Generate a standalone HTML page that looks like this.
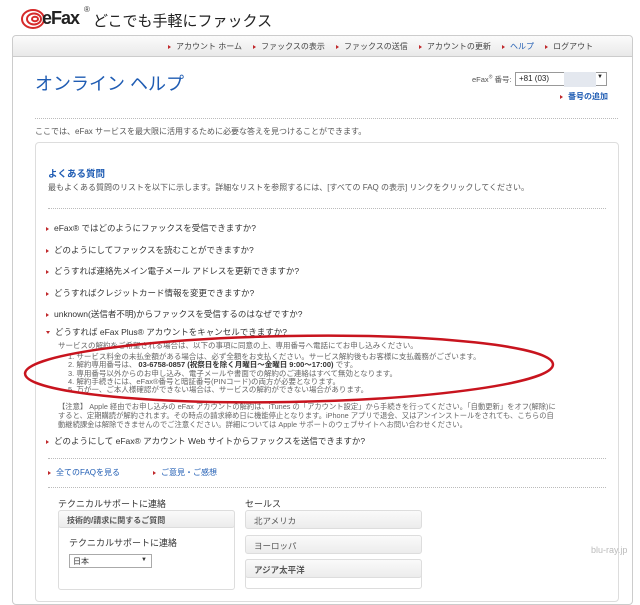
<!DOCTYPE html>
<html><head><meta charset="utf-8"><style>
*{margin:0;padding:0;box-sizing:border-box}
body{width:640px;height:578px;overflow:hidden;background:#fff;font-family:"Liberation Sans","Noto Sans CJK JP",sans-serif;position:relative;color:#555;font-size:8px}
.a{position:absolute;white-space:nowrap}
.tri{display:inline-block;width:0;height:0;border-left:3px solid #c0282b;border-top:2.5px solid transparent;border-bottom:2.5px solid transparent;margin-right:5px;vertical-align:middle}
.dot{position:absolute;border-top:1px dotted #bbb;height:0}
.faq{position:absolute;left:46px;font-size:8.5px;color:#333}
.blue{color:#1f5cb3}
.box{position:absolute;border:1px solid #ddd;border-radius:3px;background:linear-gradient(#fafafa,#ececec);font-size:8.5px;padding:4px 8px;color:#555}
</style></head><body>
<div class="a" style="left:20px;top:6px;width:26px;height:22px">
<svg width="30" height="24" viewBox="0 0 30 24"><g fill="none" stroke="#d62a2a" stroke-width="2"><ellipse cx="13" cy="13" rx="11" ry="9"/><ellipse cx="14" cy="13" rx="7" ry="5.5"/><ellipse cx="15" cy="13" rx="3" ry="2.2"/></g></svg></div>
<div class="a" style="left:42px;top:8px;font-size:18px;font-weight:bold;color:#222;letter-spacing:-1px">eFax</div>
<div class="a" style="left:84px;top:5px;font-size:8px;color:#333">®</div>
<div class="a" style="left:93px;top:10px;font-size:15px;color:#222">どこでも手軽にファックス</div>
<div class="a" style="left:12px;top:35px;width:621px;height:570px;border:1px solid #ccc;border-radius:4px"></div>
<div class="a" style="left:13px;top:36px;width:619px;height:21px;background:linear-gradient(#fbfbfb,#e9e9e9);border-bottom:1px solid #ccc;border-radius:4px 4px 0 0"></div>
<div class="a" style="left:168px;top:42px;font-size:8px;color:#444;line-height:10px">
<span class="tri"></span>アカウント ホーム&nbsp;&nbsp;&nbsp;&nbsp;&nbsp;<span class="tri"></span>ファックスの表示&nbsp;&nbsp;&nbsp;&nbsp;&nbsp;<span class="tri"></span>ファックスの送信&nbsp;&nbsp;&nbsp;&nbsp;&nbsp;<span class="tri"></span>アカウントの更新&nbsp;&nbsp;&nbsp;&nbsp;&nbsp;<span class="tri"></span><span class="blue">ヘルプ</span>&nbsp;&nbsp;&nbsp;&nbsp;&nbsp;<span class="tri"></span>ログアウト</div>
<div class="a blue" style="left:35px;top:70px;font-size:18px">オンライン ヘルプ</div>
<div class="a" style="left:472px;top:74px;font-size:7.5px;color:#555">eFax<sup style="font-size:5px">®</sup> 番号:</div>
<div class="a" style="left:515px;top:72px;width:92px;height:14px;border:1px solid #999;background:#fff;font-size:8px;color:#222;padding:1px 3px">+81 (03)<span style="position:absolute;left:48px;top:-1px;width:32px;height:15px;background:#e4e8ef"></span><span style="position:absolute;right:3px;top:1px;font-size:6px">▼</span></div>
<div class="a blue" style="left:560px;top:91px;font-size:8px;font-weight:bold"><span class="tri"></span>番号の追加</div>
<div class="dot" style="left:35px;top:118px;width:583px"></div>
<div class="a" style="left:35px;top:126px;font-size:8px;color:#555">ここでは、eFax サービスを最大限に活用するために必要な答えを見つけることができます。</div>
<div class="a" style="left:35px;top:142px;width:584px;height:460px;border:1px solid #ddd;border-radius:4px"></div>
<div class="a blue" style="left:48px;top:166px;font-size:9.5px;font-weight:bold">よくある質問</div>
<div class="a" style="left:48px;top:182px;font-size:8px">最もよくある質問のリストを以下に示します。詳細なリストを参照するには、[すべての FAQ の表示] リンクをクリックしてください。</div>
<div class="dot" style="left:48px;top:208px;width:558px"></div>
<div class="faq" style="top:222px"><span class="tri"></span>eFax® ではどのようにファックスを受信できますか?</div>
<div class="faq" style="top:244px"><span class="tri"></span>どのようにしてファックスを読むことができますか?</div>
<div class="faq" style="top:265px"><span class="tri"></span>どうすれば連絡先メイン電子メール アドレスを更新できますか?</div>
<div class="faq" style="top:287px"><span class="tri"></span>どうすればクレジットカード情報を変更できますか?</div>
<div class="faq" style="top:308px"><span class="tri"></span>unknown(送信者不明)からファックスを受信するのはなぜですか?</div>
<div class="faq" style="top:326px"><span style="display:inline-block;border-top:3px solid #c0282b;border-left:2.5px solid transparent;border-right:2.5px solid transparent;margin-right:5px;vertical-align:middle"></span>どうすれば eFax Plus® アカウントをキャンセルできますか?</div>
<div class="a" style="left:58px;top:340px;font-size:7.5px;color:#666">サービスの解約をご希望される場合は、以下の事項に同意の上、専用番号へ電話にてお申し込みください。</div>
<div class="a" style="left:68px;top:353px;font-size:7.5px;color:#666;line-height:8.3px">1. サービス料金の未払金額がある場合は、必ず全額をお支払ください。サービス解約後もお客様に支払義務がございます。<br>2. 解約専用番号は、 <b style="color:#333">03-6758-0857 (祝祭日を除く月曜日～金曜日 9:00～17:00)</b> です。<br>3. 専用番号以外からのお申し込み、電子メールや書面での解約のご連絡はすべて無効となります。<br>4. 解約手続きには、eFax®番号と暗証番号(PINコード)の両方が必要となります。<br>5. 万が一、ご本人様確認ができない場合は、サービスの解約ができない場合があります。</div>
<div class="a" style="left:58px;top:402px;font-size:7.3px;color:#666;line-height:9px">【注意】 Apple 経由でお申し込みの eFax アカウントの解約は、iTunes の「アカウント設定」から手続きを行ってください。「自動更新」をオフ(解除)に<br>すると、定期購読が解約されます。その時点の請求締め日に機能停止となります。iPhone アプリで退会、又はアンインストールをされても、こちらの自<br>動継続課金は解除できませんのでご注意ください。詳細については Apple サポートのウェブサイトへお問い合わせください。</div>
<div class="faq" style="top:435px"><span class="tri"></span>どのようにして eFax® アカウント Web サイトからファックスを送信できますか?</div>
<svg class="a" style="left:0;top:0" width="640" height="578"><ellipse cx="289" cy="369" rx="264" ry="33" fill="none" stroke="#c8141e" stroke-width="2.5" transform="rotate(-1 289 369)"/></svg>
<div class="dot" style="left:48px;top:458px;width:558px"></div>
<div class="a blue" style="left:48px;top:467px;font-size:8px"><span class="tri"></span>全てのFAQを見る</div>
<div class="a blue" style="left:153px;top:467px;font-size:8px"><span class="tri"></span>ご意見・ご感想</div>
<div class="dot" style="left:48px;top:487px;width:558px"></div>
<div class="a" style="left:58px;top:497px;font-size:9px;color:#333">テクニカルサポートに連絡</div>
<div class="a" style="left:245px;top:497px;font-size:9px;color:#333">セールス</div>
<div class="a" style="left:58px;top:510px;width:177px;height:80px;border:1px solid #ddd;border-radius:3px"></div>
<div class="box blue" style="left:58px;top:510px;width:177px;height:18px;font-weight:bold;font-size:8px">技術的/請求に関するご質問</div>
<div class="a" style="left:69px;top:536px;font-size:9px;color:#333">テクニカルサポートに連絡</div>
<div class="a" style="left:69px;top:554px;width:83px;height:14px;border:1px solid #aaa;font-size:8px;color:#333;padding:1px 3px;background:#fff">日本<span style="position:absolute;right:4px;font-size:6px;top:2px">▼</span></div>
<div class="box" style="left:245px;top:510px;width:177px;height:19px">北アメリカ</div>
<div class="box" style="left:245px;top:535px;width:177px;height:19px">ヨーロッパ</div>
<div class="a" style="left:245px;top:559px;width:177px;height:30px;border:1px solid #ddd;border-radius:3px"></div>
<div class="box blue" style="left:245px;top:559px;width:177px;height:19px;font-weight:bold">アジア太平洋</div>
<div class="a" style="left:591px;top:545px;font-size:9px;color:#bbb">blu-ray.jp</div>
</body></html>
